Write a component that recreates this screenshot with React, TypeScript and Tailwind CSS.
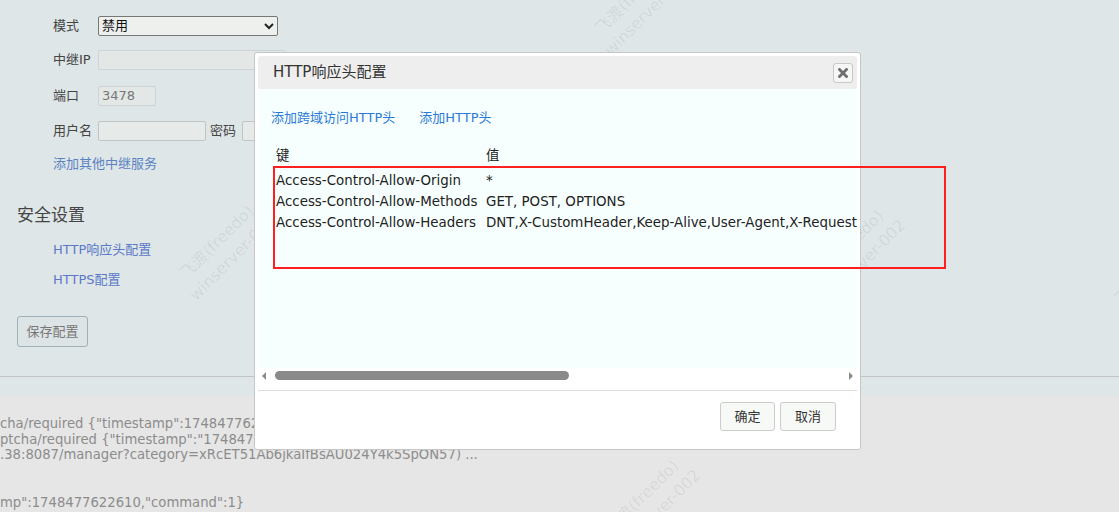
import React from 'react';

const font = { fontFamily: '"DejaVu Sans", Verdana, "Noto Sans CJK SC", sans-serif' };

// faint rotated watermark, placed by its centre
const Watermark: React.FC<{ cx: number; cy: number }> = ({ cx, cy }) => (
    <div
        className="absolute pointer-events-none select-none w-[120px] h-[44px] text-[16px] leading-[22px] text-black/[0.07] -rotate-45 text-center whitespace-nowrap"
        style={{ left: cx - 60, top: cy - 22 }}
    >
        <div>飞渡(freedo)</div>
        <div>winserver-002</div>
    </div>
);

const FormRow: React.FC<{ label: string; className?: string; children?: React.ReactNode }> = ({ label, className, children }) => (
    <div className={`flex items-center h-[20px] ${className || ''}`}>
        <span className="w-[45px] text-[13px] text-[#444]">{label}</span>
        {children}
    </div>
);

const headers = [
    { key: 'Access-Control-Allow-Origin', value: '*' },
    { key: 'Access-Control-Allow-Methods', value: 'GET, POST, OPTIONS' },
    { key: 'Access-Control-Allow-Headers', value: 'DNT,X-CustomHeader,Keep-Alive,User-Agent,X-Requested-With,If-Modified-Since,Cache-Control,Content-Type' },
];

const HeaderDialog: React.FC = () => (
    <div className="absolute left-[254px] top-[52px] w-[607px] h-[398px] bg-white border border-[#c6c6c6] rounded-[3px] p-[3px] flex flex-col">
        <div className="h-[33px] bg-[#eeeeee] rounded-[3px] flex items-center justify-between pl-[15px] pr-[4px]">
            <span className="text-[15px] text-[#333]">HTTP响应头配置</span>
            <button className="w-[20px] h-[20px] border border-[#c8c8c8] rounded-[3px] bg-[#f6f6f6] flex items-center justify-center">
                <svg width="10" height="10" viewBox="0 0 10 10">
                    <path d="M1.5 1.5 L8.5 8.5 M8.5 1.5 L1.5 8.5" stroke="#6e6e6e" strokeWidth="2.8" strokeLinecap="square" />
                </svg>
            </button>
        </div>
        <div className="h-[279px] bg-[#f7fffe] overflow-hidden">
            <div className="flex gap-[24px] pl-[13px] pt-[20px] h-[38px] leading-[18px] text-[13px] text-[#2a7ad8]">
                <a>添加跨域访问HTTP头</a>
                <a>添加HTTP头</a>
            </div>
            <div className="ml-[16px] mt-[20px] text-[13.4px] text-[#222] whitespace-nowrap">
                <div className="flex h-[24px] leading-[18px] pl-[2px]">
                    <span className="w-[210px] shrink-0">键</span>
                    <span>值</span>
                </div>
                {headers.map(h => (
                    <div key={h.key} className="flex h-[21px] items-center pl-[2px]">
                        <span className="w-[210px] shrink-0">{h.key}</span>
                        <span>{h.value}</span>
                    </div>
                ))}
            </div>
        </div>
        <div className="h-[15px] flex items-center px-[3px] bg-white">
            <svg width="6" height="8" viewBox="0 0 6 8"><path d="M5 0 L1 4 L5 8 Z" fill="#8a8a8a" /></svg>
            <div className="ml-[8px] w-[294px] h-[9px] rounded-full bg-[#8a8a8a]" />
            <div className="flex-1" />
            <svg width="6" height="8" viewBox="0 0 6 8"><path d="M1 0 L5 4 L1 8 Z" fill="#8a8a8a" /></svg>
        </div>
        <div className="mt-[7px] border-t border-[#dcdcdc] flex justify-end gap-[5px] pt-[11px] pr-[21px]">
            <button className="w-[55px] h-[29px] border border-[#cccccc] rounded-[3px] bg-[#f6f9f6] text-[13px] text-[#333]">确定</button>
            <button className="w-[56px] h-[29px] border border-[#cccccc] rounded-[3px] bg-[#f6f9f6] text-[13px] text-[#333]">取消</button>
        </div>
    </div>
);

const App: React.FC = () => {
    return (
        <div className="relative w-[1119px] h-[512px] overflow-hidden bg-[#e6e6e6]" style={font}>
            <div className="h-[377px] bg-[#dfe6e7] border-b border-[#c2c4c4]">
                <div className="pl-[53px] pt-[16px]">
                    <FormRow label="模式">
                        <div className="w-[180px] h-[20px] border border-[#777] rounded-[2px] bg-[#eef0ee] flex items-center justify-between px-[3px] text-[13px] text-[#111]">
                            <span>禁用</span>
                            <svg width="10" height="7" viewBox="0 0 10 7"><path d="M1 1 L5 5 L9 1" stroke="#222" strokeWidth="2" fill="none" /></svg>
                        </div>
                    </FormRow>
                    <FormRow label="中继IP" className="mt-[14px]">
                        <div className="w-[187px] h-[20px] border border-[#cfd3d3] rounded-[2px] bg-[#e3e7e6]" />
                    </FormRow>
                    <FormRow label="端口" className="mt-[16px]">
                        <div className="w-[58px] h-[20px] border border-[#cfd3d3] rounded-[2px] bg-[#e3e7e6] px-[3px] text-[13px] leading-[18px] text-[#777]">3478</div>
                    </FormRow>
                    <FormRow label="用户名" className="mt-[15px]">
                        <div className="w-[108px] h-[20px] border border-[#bfc4c4] rounded-[2px] bg-[#e6eae9]" />
                        <span className="ml-[4px] w-[32px] text-[13px] text-[#444]">密码</span>
                        <div className="w-[60px] h-[20px] border border-[#bfc4c4] rounded-[2px] bg-[#e6eae9]" />
                    </FormRow>
                    <div className="mt-[14px] text-[13px] text-[#5a83c4] h-[18px] leading-[18px]">添加其他中继服务</div>
                </div>
                <div className="pl-[17px] mt-[31px] text-[17px] text-[#444] leading-[22px]">安全设置</div>
                <div className="pl-[53px] mt-[15px] text-[13px] text-[#5a79c8] leading-[18px]">HTTP响应头配置</div>
                <div className="pl-[53px] mt-[12px] text-[13px] text-[#5a79c8] leading-[18px]">HTTPS配置</div>
                <button className="ml-[17px] mt-[27px] w-[71px] h-[31px] border border-[#9fb0b8] rounded-[3px] bg-[#dde4e5] text-[13px] text-[#777]">保存配置</button>
            </div>
            <div className="h-[19px] bg-[#dfe6e7]" />
            <div className="pt-[20px] text-[13.2px] leading-[15.7px] text-[#8c8c8c] whitespace-pre">
                <div>cha/required {'{'}"timestamp":1748477622610,"command":1{'}'}</div>
                <div>ptcha/required {'{'}"timestamp":"1748477622610"{'}'}</div>
                <div>.38:8087/manager?category=xRcET51Ab6jkaIfBsAU024Y4k5SpON57) ...</div>
                <div>{' '}</div>
                <div>{' '}</div>
                <div>mp":1748477622610,"command":1{'}'}</div>
            </div>

            <Watermark cx={640} cy={5} />
            <Watermark cx={225} cy={250} />
            <Watermark cx={545} cy={255} />
            <Watermark cx={855} cy={255} />
            <Watermark cx={1160} cy={275} />
            <Watermark cx={650} cy={505} />

            <HeaderDialog />

            <div className="absolute left-[273px] top-[166px] w-[673px] h-[103px] border-2 border-[#ff1f1f]" />
        </div>
    );
};

export default App;
